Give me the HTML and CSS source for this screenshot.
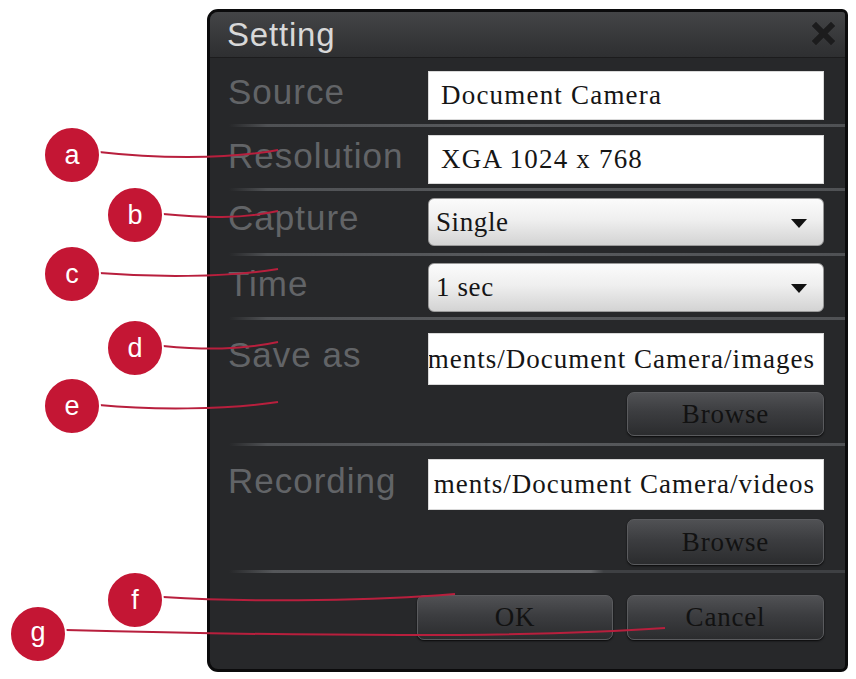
FILE: index.html
```html
<!DOCTYPE html>
<html>
<head>
<meta charset="utf-8">
<link rel="stylesheet" href="styles.css">
</head>
<body>
<div class="page">
  <div class="dialog">
    <div class="titlebar">
      <span class="title">Setting</span>
      <svg class="close" width="23" height="23" viewBox="0 0 23 23"><path d="M4 4 L19 19 M19 4 L4 19" stroke="#1c1c1d" stroke-width="6" stroke-linecap="square"/></svg>
    </div>
    <div class="row row1">
      <div class="label h49">Source</div>
      <div class="ctrl"><div class="field h49">Document Camera</div></div>
    </div>
    <div class="sep"></div>
    <div class="row row2">
      <div class="label h49">Resolution</div>
      <div class="ctrl"><div class="field h49">XGA 1024 x 768</div></div>
    </div>
    <div class="sep"></div>
    <div class="row row3">
      <div class="label h48">Capture</div>
      <div class="ctrl"><div class="select h48"><span>Single</span><span class="arrow"></span></div></div>
    </div>
    <div class="sep"></div>
    <div class="row row4">
      <div class="label h49">Time</div>
      <div class="ctrl"><div class="select h49"><span>1 sec</span><span class="arrow"></span></div></div>
    </div>
    <div class="sep"></div>
    <div class="row row5">
      <div class="label h52">Save as</div>
      <div class="ctrl stack g7">
        <div class="field path h52"><span>ments/Document Camera/images</span></div>
        <div class="btn browse h44">Browse</div>
      </div>
    </div>
    <div class="sep"></div>
    <div class="row row6">
      <div class="label h51">Recording</div>
      <div class="ctrl stack g9">
        <div class="field path h51"><span>ments/Document Camera/videos</span></div>
        <div class="btn browse h46">Browse</div>
      </div>
    </div>
    <div class="sep sep-last"></div>
    <div class="footer">
      <div class="btn ok">OK</div>
      <div class="btn cancel">Cancel</div>
    </div>
  </div>

  <svg class="callouts" width="856" height="679" viewBox="0 0 856 679">
    <g class="lines" fill="none" stroke="#b81f3d" stroke-width="2">
      <path d="M99 152 C150 158 225 160 278 150"/>
      <path d="M163 214 C205 218 240 219 278 211"/>
      <path d="M99 273 C150 277 225 278 278 269"/>
      <path d="M163 346 C205 350 240 350 278 342"/>
      <path d="M99 405 C150 410 225 410 278 402"/>
      <path d="M163 597 C260 603 380 600 455 594"/>
      <path d="M66 630 C220 634 500 640 665 628"/>
    </g>
    <g class="dots">
      <circle cx="72" cy="155" r="28"/>
      <circle cx="135" cy="215" r="28"/>
      <circle cx="72" cy="274" r="28"/>
      <circle cx="135" cy="348" r="28"/>
      <circle cx="72" cy="406" r="28"/>
      <circle cx="135" cy="600" r="28"/>
      <circle cx="38" cy="634" r="28"/>
    </g>
    <g class="letters">
      <text x="72" y="164">a</text>
      <text x="135" y="224">b</text>
      <text x="72" y="283">c</text>
      <text x="135" y="357">d</text>
      <text x="72" y="415">e</text>
      <text x="135" y="609">f</text>
      <text x="38" y="641">g</text>
    </g>
  </svg>
</div>
</body>
</html>
```

FILE: styles.css
```css
html, body {
  margin: 0;
  padding: 0;
  background: #ffffff;
}

.page {
  position: relative;
  width: 856px;
  height: 679px;
  padding: 9px 8px 7px 207px;
  box-sizing: border-box;
  overflow: hidden;
}

.dialog {
  width: 641px;
  height: 663px;
  box-sizing: border-box;
  border: 3px solid #0b0b0c;
  border-radius: 11px 6px 7px 11px;
  background: #27282a;
  display: flex;
  flex-direction: column;
  overflow: hidden;
  font-family: "Liberation Sans", Arial, sans-serif;
}

.titlebar {
  height: 46px;
  flex: none;
  display: flex;
  align-items: center;
  justify-content: space-between;
  padding: 0 10px 0 17px;
  background: linear-gradient(#444547, #363739 60%, #2e2f31);
  border-bottom: 1px solid #1c1c1d;
  box-sizing: border-box;
}

.title {
  color: #d8d8d8;
  font-size: 33px;
  letter-spacing: 0.8px;
  margin-top: 1px;
}

.close {
  margin-top: -2px;
}

.row {
  display: grid;
  grid-template-columns: 200px 396px;
  padding: 0 21px 0 18px;
  flex: none;
}
.row1 { padding-top: 13px; padding-bottom: 4px; }
.row2 { padding-top: 8px; padding-bottom: 4px; }
.row3 { padding-top: 7px; padding-bottom: 7px; }
.row4 { padding-top: 7px; padding-bottom: 5px; }
.row5 { padding-top: 13px; padding-bottom: 7px; }
.row6 { padding-top: 13px; padding-bottom: 5px; }

.label {
  color: #626467;
  font-size: 35px;
  letter-spacing: 1px;
  display: flex;
  align-items: center;
  padding-bottom: 8px;
  box-sizing: border-box;
  white-space: nowrap;
}

.h44 { height: 44px; }
.h46 { height: 46px; }
.h48 { height: 48px; }
.h49 { height: 49px; }
.h51 { height: 51px; }
.h52 { height: 52px; }

.ctrl {
  display: flex;
  flex-direction: column;
}
.g7 { gap: 7px; }
.g9 { gap: 9px; }

.field {
  background: #ffffff;
  box-sizing: border-box;
  border: 1px solid #d9d9d9;
  display: flex;
  align-items: center;
  padding: 0 12px;
  font-family: "Liberation Serif", "Times New Roman", serif;
  font-size: 27px;
  letter-spacing: 1.2px;
  color: #151515;
  white-space: nowrap;
  overflow: hidden;
}

.field.path {
  justify-content: flex-end;
  padding: 0 8px 0 0;
  letter-spacing: 1px;
}

.select {
  box-sizing: border-box;
  border-radius: 6px;
  background: linear-gradient(#fbfbfb, #efefef 45%, #d3d3d3);
  border: 1px solid #9a9a9a;
  display: flex;
  align-items: center;
  justify-content: space-between;
  padding: 0 16px 0 7px;
  font-family: "Liberation Serif", "Times New Roman", serif;
  font-size: 27px;
  letter-spacing: 0.6px;
  color: #151515;
}

.arrow {
  width: 0;
  height: 0;
  border-left: 8px solid transparent;
  border-right: 8px solid transparent;
  border-top: 9px solid #111111;
  margin-top: 2px;
}

.sep {
  height: 3px;
  flex: none;
  background: linear-gradient(to right, rgba(80,82,85,0) 3%, #4f5154 9%, #585a5d 50%, #4f5154 100%);
}
.sep-last {
  background: linear-gradient(to right, rgba(80,82,85,0) 3%, #55575a 10%, #66686b 60%, #3e4043 62%, #3e4043 100%);
}

.btn {
  box-sizing: border-box;
  border: 1px solid #5a5b5e;
  border-radius: 7px;
  background: linear-gradient(#505154, #3c3d40 45%, #2b2c2e);
  box-shadow: 0 1px 2px rgba(0,0,0,0.8);
  display: flex;
  align-items: center;
  justify-content: center;
  font-family: "Liberation Serif", "Times New Roman", serif;
  font-size: 27px;
  letter-spacing: 0.8px;
  color: #121212;
}

.browse {
  width: 197px;
  align-self: flex-end;
}

.footer {
  display: flex;
  justify-content: flex-end;
  gap: 14px;
  padding: 22px 21px 0 0;
  flex: none;
}
.ok { width: 196px; height: 45px; }
.cancel { width: 197px; height: 45px; }

.callouts {
  position: absolute;
  top: 0;
  left: 0;
  pointer-events: none;
}
.dots circle {
  fill: #c41634;
  stroke: #ffffff;
  stroke-width: 2;
}
.letters text {
  fill: #ffffff;
  font-family: "Liberation Sans", Arial, sans-serif;
  font-size: 27px;
  text-anchor: middle;
}
```
